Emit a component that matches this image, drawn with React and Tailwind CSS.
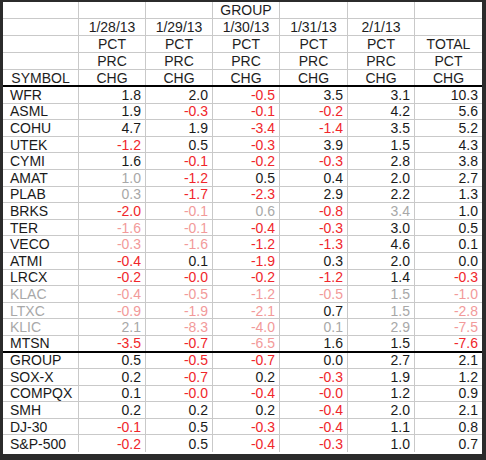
const cols = 'grid grid-cols-[76px_67px_67px_67px_68px_67px_67px]';

// f = faded cell indexes (0 = symbol), all = whole row faded
const rows = [
  { s: 'WFR', v: ['1.8', '2.0', '-0.5', '3.5', '3.1', '10.3'] },
  { s: 'ASML', v: ['1.9', '-0.3', '-0.1', '-0.2', '4.2', '5.6'] },
  { s: 'COHU', v: ['4.7', '1.9', '-3.4', '-1.4', '3.5', '5.2'] },
  { s: 'UTEK', v: ['-1.2', '0.5', '-0.3', '3.9', '1.5', '4.3'] },
  { s: 'CYMI', v: ['1.6', '-0.1', '-0.2', '-0.3', '2.8', '3.8'] },
  { s: 'AMAT', v: ['1.0', '-1.2', '0.5', '0.4', '2.0', '2.7'], f: [1] },
  { s: 'PLAB', v: ['0.3', '-1.7', '-2.3', '2.9', '2.2', '1.3'], f: [1] },
  { s: 'BRKS', v: ['-2.0', '-0.1', '0.6', '-0.8', '3.4', '1.0'], f: [2, 3, 5] },
  { s: 'TER', v: ['-1.6', '-0.1', '-0.4', '-0.3', '3.0', '0.5'], f: [1, 2] },
  { s: 'VECO', v: ['-0.3', '-1.6', '-1.2', '-1.3', '4.6', '0.1'], f: [1, 2] },
  { s: 'ATMI', v: ['-0.4', '0.1', '-1.9', '0.3', '2.0', '0.0'] },
  { s: 'LRCX', v: ['-0.2', '-0.0', '-0.2', '-1.2', '1.4', '-0.3'] },
  { s: 'KLAC', v: ['-0.4', '-0.5', '-1.2', '-0.5', '1.5', '-1.0'], f: [0, 1, 2, 3, 4, 5, 6] },
  { s: 'LTXC', v: ['-0.9', '-1.9', '-2.1', '0.7', '1.5', '-2.8'], f: [0, 1, 2, 3, 5, 6] },
  { s: 'KLIC', v: ['2.1', '-8.3', '-4.0', '0.1', '2.9', '-7.5'], f: [0, 1, 2, 3, 4, 5, 6] },
  { s: 'MTSN', v: ['-3.5', '-0.7', '-6.5', '1.6', '1.5', '-7.6'], f: [3], line: true },
  { s: 'GROUP', v: ['0.5', '-0.5', '-0.7', '0.0', '2.7', '2.1'] },
  { s: 'SOX-X', v: ['0.2', '-0.7', '0.2', '-0.3', '1.9', '1.2'] },
  { s: 'COMPQX', v: ['0.1', '-0.0', '-0.4', '-0.0', '1.2', '0.9'] },
  { s: 'SMH', v: ['0.2', '0.2', '0.2', '-0.4', '2.0', '2.1'] },
  { s: 'DJ-30', v: ['-0.1', '0.5', '-0.3', '-0.4', '1.1', '0.8'] },
  { s: 'S&P-500', v: ['-0.2', '0.5', '-0.4', '-0.3', '1.0', '0.7'], last: true },
];

const header = [
  ['', '', '', 'GROUP', '', '', ''],
  ['', '1/28/13', '1/29/13', '1/30/13', '1/31/13', '2/1/13', ''],
  ['', 'PCT', 'PCT', 'PCT', 'PCT', 'PCT', 'TOTAL'],
  ['', 'PRC', 'PRC', 'PRC', 'PRC', 'PRC', 'PCT'],
  ['SYMBOL', 'CHG', 'CHG', 'CHG', 'CHG', 'CHG', 'CHG'],
];

const numColor = (n, faded) => {
  const neg = n.startsWith('-');
  if (faded) return neg ? 'text-[#f29a9a]' : 'text-[#a8a8a8]';
  return neg ? 'text-[#f0262b]' : 'text-[#1a1a1a]';
};

export default function App() {
  return (
    <div
      className="w-[486px] h-[460px] bg-[#2b2b2b] pt-[2px] pl-[3px] pr-[4px] pb-[6px] text-[14px] leading-none"
      style={{ fontFamily: '"Liberation Sans", Arial, sans-serif' }}
    >
      <div className="bg-white w-[479px] h-[452px]">
        {header.map((r, i) => (
          <div
            key={i}
            className={`${cols} h-[17px] ${i === 4 ? 'border-b-2 border-black' : 'border-b border-[#c9c9c9]'}`}
          >
            {r.map((t, j) => (
              <div
                key={j}
                className={`flex items-center justify-center text-[#1e1e1e] ${j < 6 ? 'border-r border-[#c9c9c9]' : ''}`}
              >
                {t}
              </div>
            ))}
          </div>
        ))}
        {rows.map((r) => {
          const f = r.f || [];
          return (
            <div
              key={r.s}
              className={`${cols} h-[16.6px] ${
                r.line ? 'border-b-2 border-black' : r.last ? '' : 'border-b border-[#c9c9c9]'
              }`}
            >
              <div
                className={`flex items-center pl-[7px] border-r border-[#c9c9c9] ${
                  f.includes(0) ? 'text-[#a8a8a8]' : 'text-[#1a1a1a]'
                }`}
              >
                {r.s}
              </div>
              {r.v.map((n, j) => (
                <div
                  key={j}
                  className={`flex items-center justify-end pr-[4px] ${j < 5 ? 'border-r border-[#c9c9c9]' : ''} ${numColor(
                    n,
                    f.includes(j + 1)
                  )}`}
                >
                  {n}
                </div>
              ))}
            </div>
          );
        })}
      </div>
    </div>
  );
}
